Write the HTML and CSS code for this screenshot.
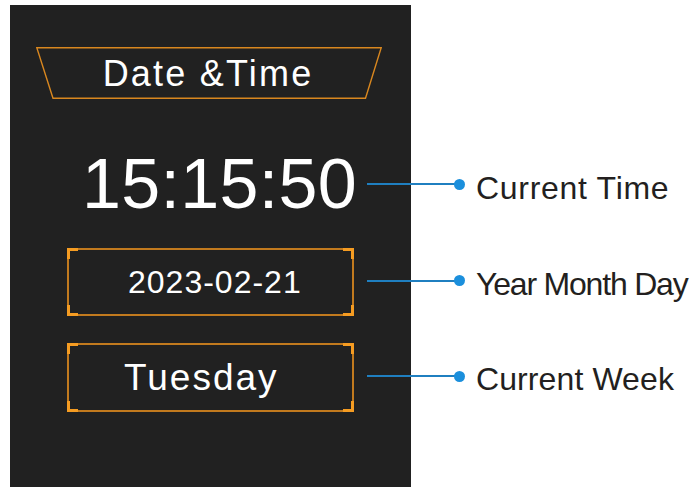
FILE: index.html
```html
<!DOCTYPE html>
<html>
<head>
<meta charset="utf-8">
<link rel="stylesheet" href="styles.css">
</head>
<body>
<div class="panel">
  <div class="title">
    <svg class="title-frame" width="346" height="52" viewBox="0 0 346 52">
      <polygon points="0.8,0.8 345.2,0.8 329.5,51.2 17,51.2" fill="none" stroke="#d9871f" stroke-width="1.4"/>
    </svg>
    <span class="title-text">Date &amp;Time</span>
  </div>

  <div class="row row-time">
    <div class="item item-time">15:15:50</div>
    <div class="connector"><span class="line"></span><span class="dot"></span></div>
    <div class="label label-time">Current Time</div>
  </div>

  <div class="row row-date">
    <div class="item box item-date">2023-02-21</div>
    <div class="connector"><span class="line"></span><span class="dot"></span></div>
    <div class="label label-date">Year Month Day</div>
  </div>

  <div class="row row-week">
    <div class="item box item-week">Tuesday</div>
    <div class="connector"><span class="line"></span><span class="dot"></span></div>
    <div class="label label-week">Current Week</div>
  </div>
</div>
</body>
</html>
```

FILE: styles.css
```css
html, body {
  margin: 0;
  padding: 0;
  background: #ffffff;
}

body {
  font-family: "Liberation Sans", Arial, sans-serif;
}

.panel {
  box-sizing: border-box;
  width: 401px;
  height: 482px;
  margin: 5px 0 0 10px;
  padding-top: 42px;
  background: #212121;
  display: flex;
  flex-direction: column;
}

.title {
  position: relative;
  width: 346px;
  height: 52px;
  margin-left: 26px;
  display: flex;
  align-items: center;
  justify-content: center;
}

.title-frame {
  position: absolute;
  left: 0;
  top: 0;
}

.title-text {
  position: relative;
  color: #ffffff;
  font-size: 36px;
  letter-spacing: 2.2px;
  margin-left: -2px;
  margin-top: 1px;
}

.row {
  display: flex;
  align-items: center;
  width: max-content;
  margin-left: 57px;
}

.row-time {
  margin-top: 50px;
  height: 70px;
}

.row-date {
  margin-top: 29px;
}

.row-week {
  margin-top: 27px;
}

.item {
  box-sizing: border-box;
  width: 287px;
  flex-shrink: 0;
  color: #ffffff;
}

.item-time {
  font-size: 70px;
  line-height: 70px;
  padding-left: 15px;
  letter-spacing: 0.3px;
}

.box {
  --corner: #f59c22;
  --edge: #c27a1e;
  display: flex;
  align-items: center;
  background-image:
    linear-gradient(var(--corner), var(--corner)),
    linear-gradient(var(--corner), var(--corner)),
    linear-gradient(var(--corner), var(--corner)),
    linear-gradient(var(--corner), var(--corner)),
    linear-gradient(var(--corner), var(--corner)),
    linear-gradient(var(--corner), var(--corner)),
    linear-gradient(var(--corner), var(--corner)),
    linear-gradient(var(--corner), var(--corner)),
    linear-gradient(var(--edge), var(--edge)),
    linear-gradient(var(--edge), var(--edge)),
    linear-gradient(var(--edge), var(--edge)),
    linear-gradient(var(--edge), var(--edge));
  background-size:
    11px 3px, 3px 11px,
    11px 3px, 3px 11px,
    11px 3px, 3px 11px,
    11px 3px, 3px 11px,
    100% 2px, 100% 2px,
    2px 100%, 2px 100%;
  background-position:
    left top, left top,
    right top, right top,
    left bottom, left bottom,
    right bottom, right bottom,
    left top, left bottom,
    left top, right top;
  background-repeat: no-repeat;
}

.item-date {
  height: 68px;
  padding-left: 61px;
  font-size: 32px;
  letter-spacing: 1px;
}

.item-week {
  height: 69px;
  padding-left: 57px;
  font-size: 37px;
  letter-spacing: 2px;
}

.connector {
  display: flex;
  align-items: center;
  margin-left: 13px;
  flex-shrink: 0;
}

.row-date .connector,
.row-week .connector {
  margin-top: -3px;
}

.line {
  display: block;
  width: 88px;
  height: 2px;
  background: #1f7fc0;
}

.dot {
  display: block;
  width: 11px;
  height: 11px;
  border-radius: 50%;
  background: #1b8fdc;
  margin-left: -1px;
}

.label {
  margin-left: 11px;
  color: #231f20;
  font-size: 32px;
  white-space: nowrap;
}

.label-time {
  margin-top: 9px;
  letter-spacing: 0.7px;
}

.label-date {
  margin-top: 4px;
  letter-spacing: -1.2px;
}

.label-week {
  margin-top: 3px;
  letter-spacing: 0.1px;
}
```
